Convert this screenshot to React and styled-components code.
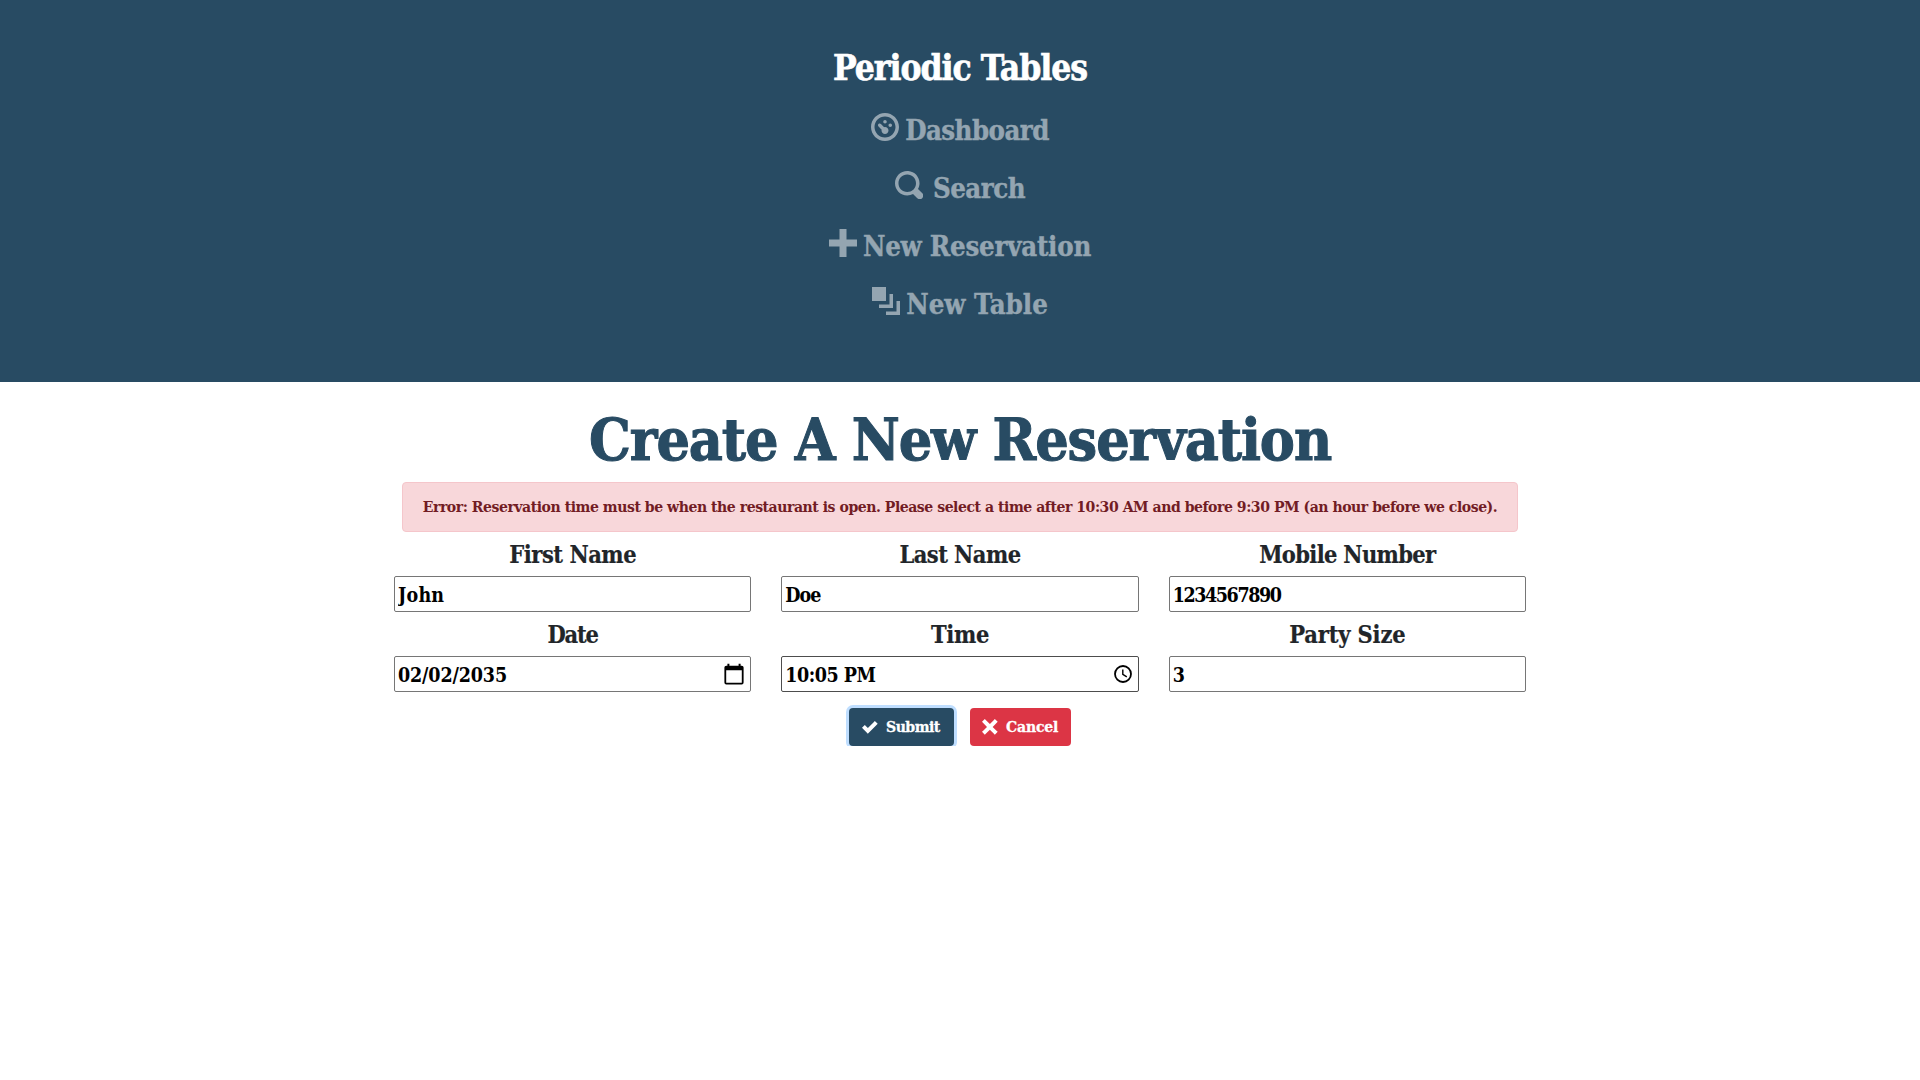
import React from "react";
import styled, { createGlobalStyle } from "styled-components";

const GlobalStyle = createGlobalStyle`
  *, *::before, *::after { box-sizing: border-box; }
  body {
    margin: 0;
    background: #fff;
    color: #212529;
    font-family: "DejaVu Serif Condensed", "DejaVu Serif", serif;
    font-weight: 700;
  }
`;

const Header = styled.header`
  display: flex;
  flex-direction: column;
  align-items: center;
  height: 382px;
  padding-top: 41px;
  background: #284b63;
`;

const Brand = styled.a`
  color: #fff;
  font-size: 35.1px;
  line-height: 54px;
  letter-spacing: -1.02px;
  -webkit-text-stroke: 0.6px currentColor;
`;

const Nav = styled.nav`
  display: flex;
  flex-direction: column;
  align-items: center;
  gap: 16px;
  margin-top: 14px;
`;

const NavLink = styled.a`
  display: flex;
  align-items: flex-start;
  gap: ${(p) => p.$gap || 6}px;
  color: #94a5b1;
  font-size: 27.3px;
  line-height: 42px;
  letter-spacing: ${(p) => p.$spacing}px;

  span {
    -webkit-text-stroke: 0.4px currentColor;
  }
`;

const Icon = styled.svg`
  flex: none;
  display: block;
  width: ${(p) => p.$size}px;
  height: ${(p) => p.$size}px;
  margin-top: ${(p) => p.$top || 0}px;
  fill: currentColor;
`;

const Main = styled.main`
  display: flex;
  flex-direction: column;
  align-items: center;
  padding-top: 22px;
`;

const Title = styled.h1`
  margin: 0;
  color: #284b63;
  font-size: 58.5px;
  line-height: 72px;
  letter-spacing: -1.08px;
  -webkit-text-stroke: 1px currentColor;
`;

const Alert = styled.div`
  width: 1116px;
  height: 50px;
  margin-top: 6px;
  border: 1px solid #f5c6cb;
  border-radius: 4px;
  background: #f8d7da;
  color: #721c24;
  font-size: 15.6px;
  line-height: 48px;
  letter-spacing: -0.457px;
  text-align: center;
  white-space: nowrap;
`;

const Form = styled.form`
  display: flex;
  flex-direction: column;
  align-items: center;
  width: 1132px;
  margin-top: 5px;
`;

const Fields = styled.div`
  display: grid;
  grid-template-columns: repeat(3, 1fr);
  gap: 5px 30px;
  width: 100%;
`;

const Field = styled.label`
  display: flex;
  flex-direction: column;
  gap: 3px;
  text-align: center;
`;

const Label = styled.span`
  font-size: 23.4px;
  line-height: 36px;
  letter-spacing: ${(p) => p.$spacing}px;
  -webkit-text-stroke: 0.2px currentColor;
`;

const InputBox = styled.span`
  display: flex;
  align-items: center;
  height: 36px;
  padding-right: ${(p) => p.$inset || 0}px;
  border: 1px solid ${(p) => (p.$dark ? "#4d4d4d" : "#767676")};
  border-radius: 2px;
  background: #fff;
  color: #000;
`;

const Input = styled.input`
  flex: 1;
  min-width: 0;
  height: 34px;
  margin: 0;
  padding: 2px 3px 0;
  border: 0;
  background: transparent;
  color: #000;
  font: inherit;
  font-size: 19.5px;
  letter-spacing: ${(p) => p.$spacing}px;
  outline: none;
`;

const PickerIcon = styled.svg`
  flex: none;
  display: block;
  width: ${(p) => p.$width}px;
  height: ${(p) => p.$height}px;
`;

const Actions = styled.div`
  display: flex;
  gap: 16px;
  margin-top: 16px;
`;

const Button = styled.button`
  display: flex;
  align-items: center;
  width: ${(p) => p.$width}px;
  height: 38px;
  padding: 0 0 0 ${(p) => p.$inset}px;
  gap: 8px;
  border: 0;
  border-radius: 4px;
  background: ${(p) => p.$color};
  box-shadow: ${(p) => (p.$focused ? "0 0 0 3px #bfdeff" : "none")};
  color: #fff;
  font: inherit;
  font-size: 15.6px;
  line-height: 24px;
  letter-spacing: ${(p) => p.$spacing}px;

  span {
    -webkit-text-stroke: 0.3px currentColor;
  }
`;

const icons = {
  dashboard:
    "M4 0c-2.2 0-4 1.8-4 4s1.8 4 4 4 4-1.8 4-4-1.8-4-4-4zm0 1c1.66 0 3 1.34 3 3s-1.34 3-3 3-3-1.34-3-3 1.34-3 3-3zm0 1c-.28 0-.5.22-.5.5s.22.5.5.5.5-.22.5-.5-.22-.5-.5-.5zm-1.66 1a.5.5 0 0 0-.19.84l.91.91c-.02.08-.06.16-.06.25 0 .55.45 1 1 1s1-.45 1-1-.45-1-1-1c-.09 0-.17.04-.25.06l-.91-.91a.5.5 0 0 0-.44-.16.5.5 0 0 0-.06 0zm3.16 0c-.28 0-.5.22-.5.5s.22.5.5.5.5-.22.5-.5-.22-.5-.5-.5z",
  search:
    "M3.5 0c-1.93 0-3.5 1.57-3.5 3.5s1.57 3.5 3.5 3.5c.59 0 1.17-.14 1.66-.41a1 1 0 0 0 .13.13l1 1a1.02 1.02 0 1 0 1.44-1.44l-1-1a1 1 0 0 0-.16-.13c.27-.49.44-1.06.44-1.66 0-1.93-1.55-3.5-3.5-3.5zm0 1c1.39 0 2.5 1.11 2.5 2.5 0 .66-.24 1.27-.66 1.72-.01.01-.02.02-.03.03a1 1 0 0 0-.13.13c-.44.4-1.04.63-1.69.63-1.39 0-2.5-1.11-2.5-2.5s1.11-2.5 2.5-2.5z",
  plus: "M3 0v3h-3v2h3v3h2v-3h3v-2h-3v-3h-2z",
  layers: "M0 0v4h4v-4h-4zm5 2v3h-3v1h4v-4h-1zm2 2v3h-3v1h4v-4h-1z",
  check:
    "M6.41 1l-.69.72-2.78 2.78-.81-.78-.72-.72-1.41 1.41.72.72 1.5 1.5.69.72.72-.72 3.5-3.5.72-.72-1.44-1.41z",
  cancel:
    "M1.41 0l-1.41 1.41.72.72 1.78 1.81-1.78 1.78-.72.69 1.41 1.44.72-.72 1.81-1.81 1.78 1.81.69.72 1.44-1.44-.72-.69-1.81-1.78 1.81-1.81.72-.72-1.44-1.41-.69.72-1.78 1.78-1.81-1.78-.72-.72z",
};

function Glyph({ name, size, top }) {
  return (
    <Icon viewBox="0 0 8 8" $size={size} $top={top} aria-hidden="true">
      <path d={icons[name]} />
    </Icon>
  );
}

function CalendarIcon() {
  return (
    <PickerIcon viewBox="0 0 20 22" $width={20} $height={22} aria-hidden="true">
      <path
        fill="#000"
        fillRule="evenodd"
        d="M3.4 0.8h2v1.9h9.2v-1.9h2v1.9h1.1a1.9 1.9 0 0 1 1.9 1.9v15a1.9 1.9 0 0 1-1.9 1.9H2.3a1.9 1.9 0 0 1-1.9-1.9v-15a1.9 1.9 0 0 1 1.9-1.9h1.1zM2.2 7.2v12.5h15.6V7.2z"
      />
    </PickerIcon>
  );
}

function ClockIcon() {
  return (
    <PickerIcon viewBox="0 0 18 18" $width={18} $height={18} aria-hidden="true">
      <circle cx="9" cy="9" r="8" fill="none" stroke="#000" strokeWidth="1.8" />
      <path d="M8.8 4.4v5l4 2.5" fill="none" stroke="#000" strokeWidth="1.4" />
    </PickerIcon>
  );
}

const links = [
  { icon: "dashboard", text: "Dashboard", spacing: -0.54 },
  { icon: "search", text: "Search", spacing: -0.5, gap: 10 },
  { icon: "plus", text: "New Reservation", spacing: -0.21 },
  { icon: "layers", text: "New Table", spacing: 0.02 },
];

const fields = [
  { label: "First Name", labelSpacing: -0.46, value: "John", spacing: 0.2 },
  { label: "Last Name", labelSpacing: -0.54, value: "Doe", spacing: -1 },
  { label: "Mobile Number", labelSpacing: -0.66, value: "1234567890", spacing: -1.42 },
  { label: "Date", labelSpacing: -1.2, value: "02/02/2035", spacing: -0.15, inset: 6, picker: CalendarIcon },
  { label: "Time", labelSpacing: -0.3, value: "10:05 PM", spacing: -0.5, dark: true, inset: 6, picker: ClockIcon },
  { label: "Party Size", labelSpacing: -0.14, value: "3", spacing: 0 },
];

export default function App() {
  return (
    <>
      <GlobalStyle />
      <Header>
        <Brand>Periodic Tables</Brand>
        <Nav>
          {links.map((l) => (
            <NavLink key={l.text} $spacing={l.spacing} $gap={l.gap}>
              <Glyph name={l.icon} size={28} top={4} />
              <span>{l.text}</span>
            </NavLink>
          ))}
        </Nav>
      </Header>
      <Main>
        <Title>Create A New Reservation</Title>
        <Alert>
          Error: Reservation time must be when the restaurant is open. Please select a time after
          10:30 AM and before 9:30 PM (an hour before we close).
        </Alert>
        <Form onSubmit={(e) => e.preventDefault()}>
          <Fields>
            {fields.map((f) => (
              <Field key={f.label}>
                <Label $spacing={f.labelSpacing}>{f.label}</Label>
                <InputBox $dark={f.dark} $inset={f.inset}>
                  <Input type="text" defaultValue={f.value} $spacing={f.spacing} />
                  {f.picker && <f.picker />}
                </InputBox>
              </Field>
            ))}
          </Fields>
          <Actions>
            <Button type="submit" $width={105} $inset={13} $color="#284b63" $spacing={-0.5} $focused>
              <Glyph name="check" size={16} />
              <span>Submit</span>
            </Button>
            <Button type="button" $width={101} $inset={12} $color="#dc3545" $spacing={-0.18}>
              <Glyph name="cancel" size={16} />
              <span>Cancel</span>
            </Button>
          </Actions>
        </Form>
      </Main>
    </>
  );
}
